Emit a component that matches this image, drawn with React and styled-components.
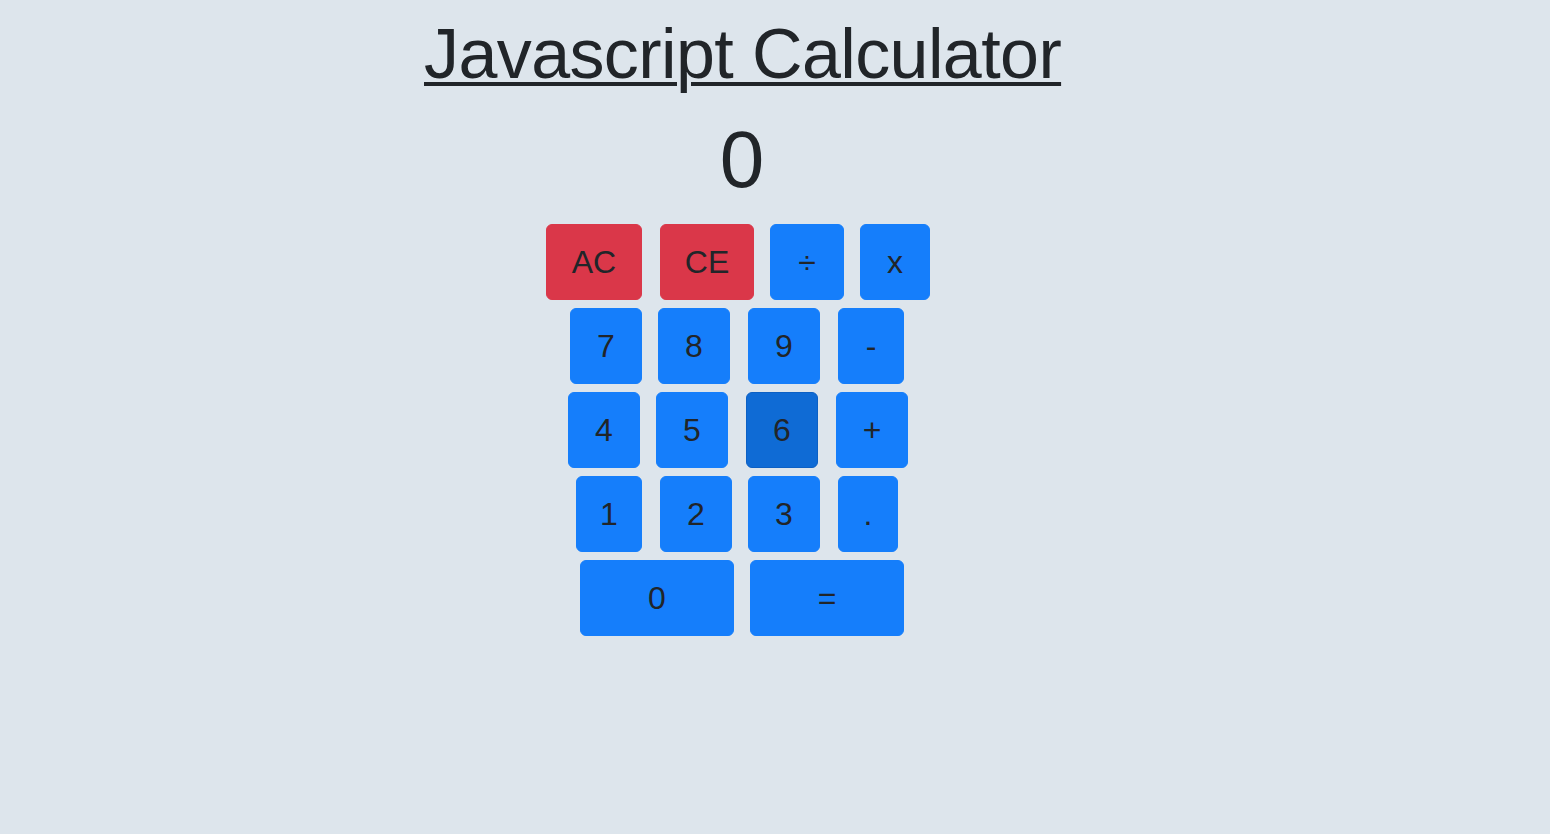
import React from "react";
import styled, { createGlobalStyle } from "styled-components";

const Global = createGlobalStyle`
  html, body { margin: 0; padding: 0; background: #dde5ec; }
  body { font-family: "Liberation Sans", Arial, sans-serif; color: #212529; }
`;

const Page = styled.div`
  width: 1550px;
  height: 834px;
  display: flex;
  flex-direction: column;
  align-items: flex-start;
  padding-left: 424px;
  box-sizing: border-box;
`;

const Title = styled.h1`
  margin: 14px 0 0 0;
  font-size: 70px;
  font-weight: 400;
  line-height: 80px;
  text-decoration: underline;
  text-decoration-thickness: 4px;
  text-underline-offset: 4px;
  letter-spacing: -0.6px;
  width: 636px;
  text-align: center;
  white-space: nowrap;
`;

const Display = styled.div`
  width: 636px;
  text-align: center;
  font-size: 80px;
  line-height: 100px;
  margin-top: 16px;
`;

const Keypad = styled.div`
  display: flex;
  flex-direction: column;
  gap: 8px;
  margin-top: 14px;
  margin-left: 122px;
`;

const Row = styled.div`
  display: flex;
  padding-left: ${(p) => p.$indent || 0}px;
`;

const Key = styled.button`
  box-sizing: border-box;
  width: ${(p) => p.$w}px;
  height: 76px;
  margin: 0 0 0 ${(p) => p.$ml || 0}px;
  padding: 0;
  border-radius: 6px;
  border: 1px solid ${(p) =>
    p.$danger ? "#da3749" : p.$active ? "#0c60c4" : "#157efb"};
  background: ${(p) =>
    p.$danger ? "#da3749" : p.$active ? "#0f6bd5" : "#157efb"};
  color: #212529;
  font-family: "Liberation Sans", Arial, sans-serif;
  font-size: 32px;
  display: flex;
  align-items: center;
  justify-content: center;
  cursor: pointer;
`;

const rows = [
  {
    indent: 0,
    keys: [
      { l: "AC", w: 96, danger: true },
      { l: "CE", w: 94, ml: 18, danger: true },
      { l: "÷", w: 74, ml: 16 },
      { l: "x", w: 70, ml: 16 },
    ],
  },
  {
    indent: 24,
    keys: [
      { l: "7", w: 72 },
      { l: "8", w: 72, ml: 16 },
      { l: "9", w: 72, ml: 18 },
      { l: "-", w: 66, ml: 18 },
    ],
  },
  {
    indent: 22,
    keys: [
      { l: "4", w: 72 },
      { l: "5", w: 72, ml: 16 },
      { l: "6", w: 72, ml: 18, active: true },
      { l: "+", w: 72, ml: 18 },
    ],
  },
  {
    indent: 30,
    keys: [
      { l: "1", w: 66 },
      { l: "2", w: 72, ml: 18 },
      { l: "3", w: 72, ml: 16 },
      { l: ".", w: 60, ml: 18 },
    ],
  },
  {
    indent: 34,
    keys: [
      { l: "0", w: 154 },
      { l: "=", w: 154, ml: 16 },
    ],
  },
];

export default function App() {
  return (
    <>
      <Global />
      <Page>
        <Title>Javascript Calculator</Title>
        <Display>0</Display>
        <Keypad>
          {rows.map((r, i) => (
            <Row key={i} $indent={r.indent}>
              {r.keys.map((k) => (
                <Key
                  key={k.l}
                  $w={k.w}
                  $ml={k.ml}
                  $danger={k.danger}
                  $active={k.active}
                >
                  {k.l}
                </Key>
              ))}
            </Row>
          ))}
        </Keypad>
      </Page>
    </>
  );
}
